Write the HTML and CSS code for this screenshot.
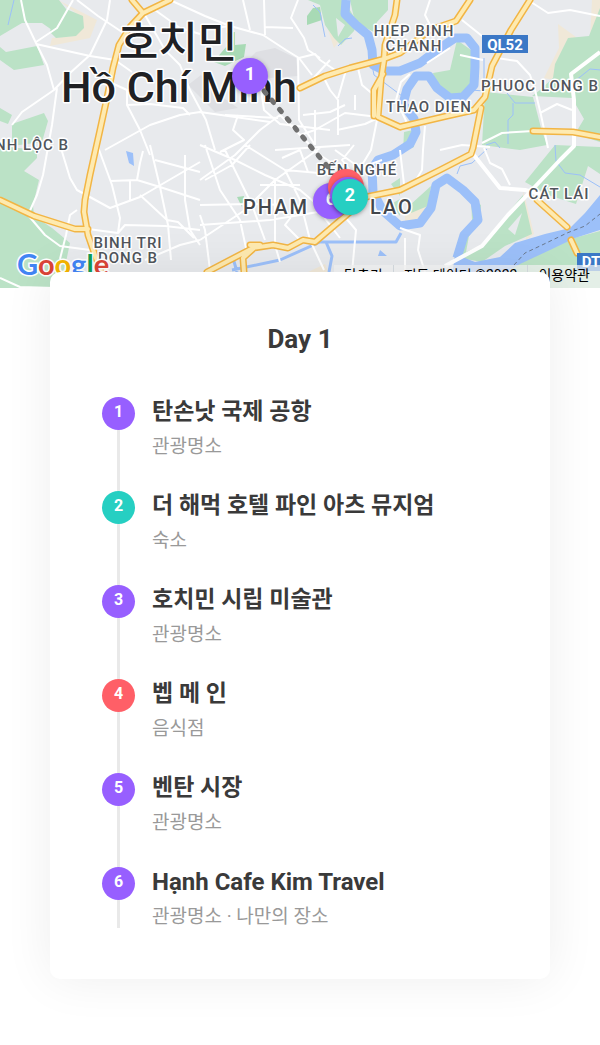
FILE: index.html
```html
<!DOCTYPE html>
<html lang="ko">
<head>
<meta charset="utf-8">
<meta name="viewport" content="width=device-width, initial-scale=1">
<title>Day 1</title>
<link rel="stylesheet" href="styles.css">
</head>
<body>
<header class="map">
<svg class="map-canvas" viewBox="0 0 600 288" preserveAspectRatio="xMidYMid slice" role="img" aria-label="호치민 지도">
  <defs>
    <path id="highways" d="M132 0L143 13 170 0M143 13L130 27 119 45 113 68 107 98 100 130 90 175 85 200 84 212 88 235 96 258 108 290M0 200L34 216 75 229H88M300 88L325 76 350 68 384 59 400 53 430 30 456 21 470 0M397 0L395 15 385 45 384 60 381 80 378 117 400 127M383 74L374 90V116M400 127L447 116 474 110 485 97 492 66 511 30 530 0M481 108L473 148 471 154 440 170 400 190 366 197M207 272L253 248 273 245 288 248 303 240 315 242 350 212M250 245H260M254 248L243 258 244 272M533 131L573 132 600 137M537 200L567 227M571 240L577 253"/>
  </defs>
  <rect class="land" width="600" height="288"/>
  <path class="urban" d="M240 68L256 52 275 48 296 58 298 76 270 78ZM188 85L201 75 215 92 238 108 215 112Z"/>
  <g class="sand">
    <path d="M58 0L97 20 90 38 50 46 52 38 74 36 80 16Z"/>
    <path d="M328 30L344 34 334 48ZM558 24L576 37 567 45 553 80 544 78 559 48ZM405 212L428 205 425 219 405 224ZM523 190L534 234 526 240ZM592 0H600V20L590 38ZM304 274L325 264 330 276Z"/>
  </g>
  <g class="park">
    <path d="M0 0H59L66 9 83 16 84 28 76 36 56 38 50 32 54 14 60 14 52 30 42 23H22L0 36Z"/>
    <path d="M0 47L6 52 37 46 44 65 14 70 0 60Z"/>
    <path d="M0 108L12 115 8 124 0 121ZM12 124L44 113 48 121 42 142 12 146Z"/>
    <path d="M0 146L37 150V158L24 171 39 180 33 205 34 216 52 228 70 243 66 262 58 288H0Z"/>
    <path d="M308 0L320 5 325 25 334 38 341 45 354 31 357 22 344 0Z"/>
    <path d="M350 0L354 18 364 27 374 32 377 22 388 10V0Z"/>
    <path class="deep" d="M307 16L313 8 320 7 322 20 307 25ZM215 60L227 46 226 33 235 32 235 45 246 44 244 57 225 66 214 62ZM237 197L244 196 242 207Z"/>
    <path d="M457 40L471 50 471 87 463 96 450 97 436 87 433 73 450 70Z"/>
    <path d="M600 8L589 36 568 38 555 64 553 78 540 90 532 96 572 98 584 119 575 134 600 142Z"/>
    <path d="M485 92L533 97 541 128 547 145 520 150 482 145Z"/>
    <path d="M404 132L413 130 414 147 403 152ZM391 184L400 178V196ZM391 204L400 199V216ZM410 205L431 186 428 206 411 213Z"/>
    <path d="M555 145L600 147V174L588 166 576 204 548 195 525 182Z"/>
    <path d="M471 198L481 205 480 222 469 236 466 252 480 246 523 195 532 234 505 246 482 262 460 258 464 235 472 220Z"/>
    <path d="M600 231L574 238 548 250 520 262 490 288H600Z"/>
  </g>
  <path class="land" d="M336 18L345 25 338 37ZM508 229L522 213 515 235Z"/>
  <path class="water-area" d="M455 254L475 262 500 257 515 243 545 234 570 228 585 213 600 195V230L575 238 550 250 520 264 500 276H452ZM126 151L133 153 134 166 129 163ZM378 256L380 250 387 256Z"/>
  <g class="river">
    <path class="wide" d="M346 0L345 14 356 25 368 35 372 50 373 65 385 71 400 71 420 63 437 50 455 38 467 38 475 48 475 67 474 85 463 97 450 98 437 88 429 76 416 76 407 89 403 104 414 119 416 132 410 144 393 155 378 160 372 169 373 192 383 211 400 226 420 223 431 208 436 185 447 178 463 190 475 202 478 220 464 235 457 258"/>
    <path class="medium" d="M232 270L280 260 320 242H396L401 233M326 242L332 256 329 272M233 258L237 272"/>
    <path class="thin" d="M313 5L320 12 325 37M338 46L345 39 352 38M484 58V91L471 90M372 65L374 75 402 96M507 93L515 103 535 103M513 103V115L508 120V144M486 145L495 142 500 148M457 174L460 166 472 163 487 149M556 161L565 173 580 175 600 187M555 145L556 161M601 70L590 69 570 85M14 0L8 25"/>
  </g>
  <g class="streets">
    <path d="M21 0L25 20 36 43 47 65 54 90M73 0L57 28 36 42M36 44L90 56 115 60 132 72M77 0L98 16 122 32 132 42M110 0L107 20 90 55 70 73 54 90 22 112 12 125M57 88L52 125 43 175 37 195 28 215 45 235 60 246 90 250M105 80L127 90V105L140 130 150 155M60 145L70 178 77 190 110 208 140 197 200 162M105 150L150 125 180 115 200 112 270 122M127 105L150 104 183 108 190 115"/>
    <path d="M145 15L165 50 180 65 190 90 206 120 215 150M155 10L180 28 200 34M88 229L118 233 125 225 165 226 200 230M98 147L112 185 120 218 118 233M77 210L70 215 66 235 60 259M110 181L137 180 160 187 200 200M143 151L140 163 137 180M130 181V201M150 145L160 187 168 225 171 260M200 240L180 245 145 260M185 155L185 200 190 230 200 245M155 160L200 172M140 195L167 220 178 222 194 238"/>
    <path d="M170 0L205 16 230 26 263 35 286 50 299 58 315 54 320 60 335 70M243 0L250 30M264 0L265 35M298 0L291 18 304 38 308 50 320 58M200 30L230 26M265 27L293 28M298 58L299 120 315 145M299 58L312 75M330 60L310 82 299 90M260 82L264 110 280 124 330 130M225 115L278 118"/>
    <path d="M324 78L330 90 338 100V135M358 68L362 85 375 96M303 115L330 112 345 105M300 135L315 130 345 113 378 117M346 70L338 98M315 110V145M337 130L365 124 378 118M377 120L371 150 362 165M355 95V110M430 0L425 15 430 25M483 60L460 55M462 20L482 36M531 2L548 13 570 10 600 16M497 58L517 61 530 75 535 90 541 115 548 148"/>
    <path class="avenue" d="M600 52L571 74 574 100V146L560 160 530 192 508 215 482 246 445 266M473 154L500 188 525 190 548 196"/>
    <path d="M540 113L557 104 572 110M482 143L502 133 533 131M484 148L490 163 502 169 510 185M410 74L401 82 396 100 409 127M440 150L462 145 490 147M425 126L423 150 422 170 416 180M400 150L404 184M427 63L450 48M0 278L20 287 55 288"/>
    <path d="M200 145L235 160 265 175 300 190 320 207M200 240L245 210 275 180 320 148M205 145L220 190 240 220 246 248M200 180L235 155 260 130 280 115M200 205L250 204 285 205M200 225L270 220 330 210M210 270L205 230 200 215M245 145L285 170 330 174M280 115L300 135 320 155 335 165M275 180V245L280 262M225 150L252 205 265 240M285 170L300 200 310 240 324 270M250 145L232 165 205 180M260 185L300 185M275 150L350 145M282 158L300 150 308 172M238 115L233 130 244 140 220 152M300 205L285 225 300 240M345 217L356 230 352 272M335 150L360 168 382 160M354 145L342 160 350 170M400 228L420 235 418 250 425 272M405 238V272M320 212L340 238"/>
  </g>
  <use class="highway-edge" href="#highways"/>
  <use class="highway" href="#highways"/>
  <path class="ferry" d="M514 265L525 253 540 246 567 233 585 226 600 214"/>
  <g class="labels">
    <text class="city" x="178" y="58">호치민</text>
    <text class="city" x="179" y="102">Hồ Chí Minh</text>
    <text x="414" y="36">HIEP BINH</text><text x="414" y="51">CHANH</text>
    <text x="429" y="112">THAO DIEN</text>
    <text class="start" x="481" y="91">PHUOC LONG B</text>
    <text class="end" x="69" y="150">NH LỘC B</text>
    <text x="357" y="175">BẾN NGHÉ</text>
    <text x="559" y="199">CÁT LÁI</text>
    <text class="district end" x="309" y="214">PHAM</text>
    <text class="district start" x="370" y="214">LAO</text>
    <text x="128" y="248">BINH TRI</text><text x="128" y="263">DONG B</text>
  </g>
  <rect class="shield" x="482" y="35" width="46" height="18"/><text class="shield-text" x="505" y="50">QL52</text>
  <rect class="shield" x="577" y="253" width="30" height="18"/><text class="shield-text" x="591" y="267">DT</text>
  <path class="route" d="M264 91L333 173"/>
  <g class="pins">
    <circle class="violet" cx="250" cy="76" r="18"/><text x="250" y="80">1</text>
    <circle class="violet" cx="331" cy="201" r="18"/><text x="331" y="205">6</text>
    <circle class="red" cx="346" cy="187" r="18"/>
    <circle class="violet" cx="348" cy="195" r="18"/>
    <circle class="teal" cx="350" cy="197" r="18"/><text x="350" y="201">2</text>
  </g>
  <text class="google" x="17" y="275"><tspan class="g-blue">G</tspan><tspan class="g-red">o</tspan><tspan class="g-yellow">o</tspan><tspan class="g-blue">g</tspan><tspan class="g-green">l</tspan><tspan class="g-red">e</tspan></text>
</svg>
<div class="credits"><button type="button">단축키</button><span>지도 데이터 ©2022</span><a href="#terms">이용약관</a></div>
</header>
<main class="card">
  <h1>Day 1</h1>
  <ol class="stops">
    <li><span class="marker">1</span><div><h2>탄손낫 국제 공항</h2><p>관광명소</p></div></li>
    <li><span class="marker stay">2</span><div><h2>더 해먹 호텔 파인 아츠 뮤지엄</h2><p>숙소</p></div></li>
    <li><span class="marker">3</span><div><h2>호치민 시립 미술관</h2><p>관광명소</p></div></li>
    <li><span class="marker food">4</span><div><h2>벱 메 인</h2><p>음식점</p></div></li>
    <li><span class="marker">5</span><div><h2>벤탄 시장</h2><p>관광명소</p></div></li>
    <li><span class="marker">6</span><div><h2 lang="vi">Hạnh Cafe Kim Travel</h2><p>관광명소 · 나만의 장소</p></div></li>
  </ol>
</main>
</body>
</html>
```

FILE: styles.css
```css
* { box-sizing: border-box; }
body {
  margin: 0;
  background: #fff;
  color: #3a3a3a;
  font-family: Roboto, "Noto Sans CJK KR", sans-serif;
}
h1, h2, p, ol { margin: 0; padding: 0; }

.map { position: relative; height: 288px; overflow: hidden; }
.map-canvas { display: block; width: 100%; height: 100%; }
.land { fill: #e8eaed; }
.urban { fill: #dedfe3; }
.sand { fill: #f0e8d8; }
.park { fill: #bbe2c6; }
.deep { fill: #a8dab5; }
.water-area { fill: #9cc0f9; }
.river { fill: none; stroke: #9cc0f9; stroke-linejoin: round; }
.wide { stroke-width: 9px; }
.medium { stroke-width: 3px; }
.thin { stroke-width: 1px; }
.streets { fill: none; stroke: #fff; stroke-width: 2px; stroke-linejoin: round; }
.avenue { stroke-width: 4px; }
.highway-edge, .highway { fill: none; stroke-linejoin: round; stroke-linecap: round; }
.highway-edge { stroke: #f2b544; stroke-width: 7px; }
.highway { stroke: #feeab0; stroke-width: 4px; }
.ferry { fill: none; stroke: #6b7a90; stroke-width: 1px; stroke-dasharray: 4 3; }
.labels {
  fill: #50555b;
  stroke: #fff;
  stroke-width: 3px;
  stroke-linejoin: round;
  paint-order: stroke;
  font-size: 15px;
  font-weight: 500;
  letter-spacing: 1px;
  text-anchor: middle;
}
.labels .start { text-anchor: start; }
.labels .end { text-anchor: end; }
.labels .district { font-size: 20px; letter-spacing: 2px; fill: #43474c; }
.labels .city { fill: #202124; font-size: 43px; letter-spacing: 0; }
.shield { fill: #3b78c6; }
.shield-text { fill: #fff; font-size: 15px; font-weight: 700; text-anchor: middle; }
.route {
  fill: none;
  stroke: #707070;
  stroke-width: 5px;
  stroke-linecap: round;
  stroke-dasharray: 3 9;
}
.pins { fill: #fff; font-size: 18px; font-weight: 700; text-anchor: middle; }
.pins circle { filter: drop-shadow(0 1px 2px rgb(0 0 0 / 30%)); }
.violet { fill: #975fff; }
.red { fill: #ff5f67; }
.teal { fill: #26cfc2; }
.google {
  font: 700 29px Lato, sans-serif;
  stroke: #fff;
  stroke-width: 3px;
  paint-order: stroke;
}
.g-blue { fill: #4285f4; }
.g-red { fill: #db4437; }
.g-yellow { fill: #f4b400; }
.g-green { fill: #0f9d58; }

.credits {
  position: absolute;
  right: 0;
  bottom: 0;
  display: flex;
  height: 23px;
  background: rgb(245 245 245 / 70%);
  color: #000;
  font-size: 14px;
  line-height: 20px;
}
.credits > * { padding: 0 10px; }
.credits > * + * { border-left: 1px solid #d5dbe0; }
.credits button {
  display: flex;
  align-items: flex-start;
  border: 0;
  background: none;
  color: inherit;
  font: inherit;
}
.credits a { color: inherit; text-decoration: none; }

.card {
  position: relative;
  margin: -16px 50px 66px;
  padding: 52px 52px 51px;
  border-radius: 10px;
  background: #fff;
  box-shadow: 0 0 50px rgb(0 0 0 / 7%);
}
.card h1 {
  margin-bottom: 42px;
  font-size: 26px;
  line-height: 30px;
  text-align: center;
}
.stops { list-style: none; }
.stops li {
  display: grid;
  grid-template-columns: 33px 1fr;
  gap: 17px;
  padding-bottom: 32px;
  background: linear-gradient(#e9e9e9, #e9e9e9) 15px 0 / 3px 100% no-repeat;
}
.stops li:last-child { padding-bottom: 0; }
.stops li:first-child { background-position-y: 10px; }
.marker {
  height: 33px;
  margin-top: 1px;
  border-radius: 50%;
  background: #975fff;
  color: #fff;
  font-size: 16px;
  font-weight: 700;
  line-height: 30px;
  text-align: center;
}
.stay { background: #26cfc2; }
.food { background: #ff5f67; }
.stops h2 {
  margin-bottom: 8px;
  font-size: 23px;
  line-height: 32px;
}
.stops h2:lang(vi) { font-size: 24px; }
.stops p {
  color: #999;
  font-size: 19px;
  line-height: 22px;
}
```
